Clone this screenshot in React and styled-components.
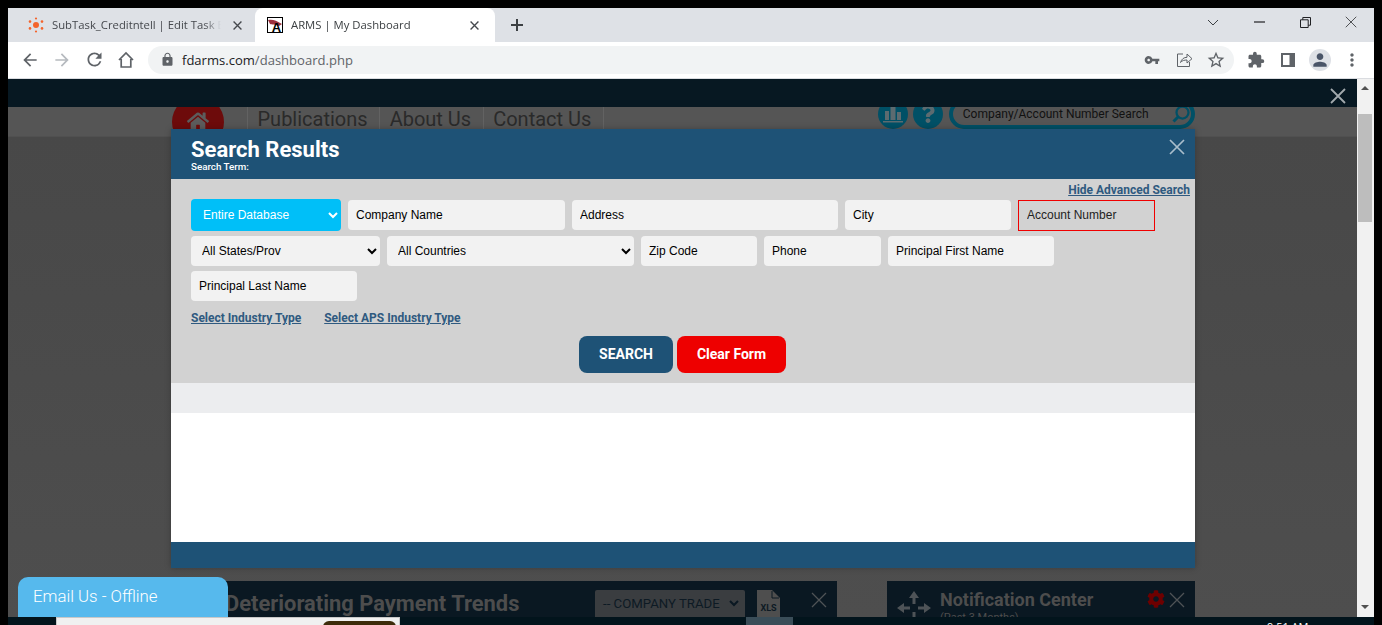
import React from "react";
import styled, { createGlobalStyle } from "styled-components";
import {
  MdArrowBack,
  MdArrowForward,
  MdRefresh,
  MdLock,
  MdVpnKey,
  MdStarBorder,
  MdExtension,
  MdPerson,
  MdMoreVert,
} from "react-icons/md";
import { FaHome, FaQuestion, FaCog } from "react-icons/fa";

const GlobalStyle = createGlobalStyle`
  html, body {
    margin: 0;
    padding: 0;
    background: #000;
    overflow: hidden;
  }
  * {
    box-sizing: border-box;
  }
`;

function CloseLines({ size = 16, stroke = "currentColor", width = 1.5 }) {
  return (
    <svg width={size} height={size} viewBox="0 0 16 16" fill="none">
      <path d="M1 1 L15 15 M15 1 L1 15" stroke={stroke} strokeWidth={width} />
    </svg>
  );
}

function App() {
  return (
    <>
      <GlobalStyle />
      <Screen>
        <Browser>
          <TabStrip>
            <Tab>
              <svg width="16" height="16" viewBox="0 0 16 16" fill="#f4642c">
                <circle cx="8" cy="8" r="3" />
                <circle cx="8" cy="1.5" r="1.1" />
                <circle cx="8" cy="14.5" r="1.1" />
                <circle cx="2" cy="4.6" r="1.3" />
                <circle cx="14" cy="4.6" r="1.3" />
                <circle cx="2" cy="11.4" r="1.3" />
                <circle cx="14" cy="11.4" r="1.3" />
              </svg>
              <TabTitle>SubTask_Creditntell | Edit Task Board</TabTitle>
              <TabClose>
                <CloseLines size={9} stroke="#45484d" width={2.4} />
              </TabClose>
            </Tab>
            <Tab active>
              <svg width="16" height="16" viewBox="0 0 16 16">
                <rect x="0.5" y="0.5" width="15" height="15" fill="#fff" stroke="#000" />
                <path d="M1 3 C5 2 9 3 15 7 L12 9 C8 7 5 8 3 7 Z" fill="#9c2f3c" />
                <text x="9.5" y="14.5" fontSize="13" fontWeight="700" textAnchor="middle" fontFamily="Liberation Sans, sans-serif" fill="#000">A</text>
              </svg>
              <TabTitle>ARMS | My Dashboard</TabTitle>
              <TabClose>
                <CloseLines size={9} stroke="#45484d" width={2.4} />
              </TabClose>
            </Tab>
            <NewTab>
              <svg width="14" height="14" viewBox="0 0 14 14">
                <path d="M7 1 V13 M1 7 H13" stroke="#3c4043" strokeWidth="2" />
              </svg>
            </NewTab>
            <WindowControls>
              <WindowButton>
                <svg width="12" height="7" viewBox="0 0 12 7" fill="none">
                  <path d="M1 1 L6 6 L11 1" stroke="#3c4043" />
                </svg>
              </WindowButton>
              <WindowButton>
                <svg width="11" height="2" viewBox="0 0 11 2">
                  <path d="M0 1 H11" stroke="#202124" strokeWidth="1.2" />
                </svg>
              </WindowButton>
              <WindowButton>
                <svg width="11" height="11" viewBox="0 0 11 11" fill="none">
                  <path d="M0.5 2.8 H8.2 V10.5 H0.5 Z M2.8 2.8 V0.5 H10.5 V8.2 H8.2" stroke="#202124" />
                </svg>
              </WindowButton>
              <WindowButton>
                <CloseLines size={12} stroke="#202124" width={1} />
              </WindowButton>
            </WindowControls>
          </TabStrip>

          <Toolbar>
            <ToolButton>
              <MdArrowBack size={20} />
            </ToolButton>
            <ToolButton faded>
              <MdArrowForward size={20} />
            </ToolButton>
            <ToolButton>
              <MdRefresh size={21} />
            </ToolButton>
            <ToolButton>
              <svg width="18" height="18" viewBox="0 0 18 18" fill="none">
                <path d="M2 9 L9 2 L16 9 M4.2 8 V16 H13.8 V8" stroke="currentColor" strokeWidth="1.7" />
              </svg>
            </ToolButton>
            <Omnibox>
              <MdLock size={15} color="#5f6368" />
              <Url>
                fdarms.com<UrlPath>/dashboard.php</UrlPath>
              </Url>
              <OmniActions>
                <ToolButton>
                  <MdVpnKey size={16} />
                </ToolButton>
                <ToolButton>
                  <svg width="17" height="17" viewBox="0 0 17 17" fill="none">
                    <path d="M7 3 H1.5 V15.5 H13.5 V11 M4.5 11.5 C5.5 8 8 6.3 11 6.3 V3 L16 7.7 L11 12 V9 C8.5 9 6 9.5 4.5 11.5 Z" stroke="currentColor" strokeWidth="1" />
                  </svg>
                </ToolButton>
                <ToolButton>
                  <MdStarBorder size={20} />
                </ToolButton>
              </OmniActions>
            </Omnibox>
            <RightTools>
              <ToolButton>
                <MdExtension size={18} />
              </ToolButton>
              <ToolButton>
                <svg width="14" height="14" viewBox="0 0 14 14">
                  <path fillRule="evenodd" d="M0 0 H14 V14 H0 Z M2 2 V12 H8.5 V2 Z" fill="currentColor" />
                </svg>
              </ToolButton>
              <ToolButton>
                <Avatar>
                  <MdPerson size={20} />
                </Avatar>
              </ToolButton>
              <ToolButton>
                <MdMoreVert size={20} />
              </ToolButton>
            </RightTools>
          </Toolbar>

          <Page>
            <Viewport>
              <TopBar>
                <CloseLines size={16} stroke="#a2a9ad" width={1.8} />
              </TopBar>
              <SiteHeader>
                <HomeBadge>
                  <FaHome size={22} color="#5c5c5c" />
                </HomeBadge>
                <SiteNav>
                  <NavItem>Publications</NavItem>
                  <NavItem>About Us</NavItem>
                  <NavItem>Contact Us</NavItem>
                </SiteNav>
                <HeaderTools>
                  <RoundIcon>
                    <svg width="20" height="18" viewBox="0 0 20 18" fill="#5c6b70">
                      <rect x="2" y="6" width="4" height="9" />
                      <rect x="7.5" y="2" width="5" height="13" />
                      <rect x="14" y="7" width="4" height="8" />
                      <rect x="0" y="16" width="20" height="1.5" />
                    </svg>
                  </RoundIcon>
                  <RoundIcon>
                    <FaQuestion size={18} color="#5c6b70" />
                  </RoundIcon>
                  <HeaderSearch>
                    <span>Company/Account Number Search</span>
                    <svg width="18" height="18" viewBox="0 0 24 24" fill="none">
                      <circle cx="14" cy="10" r="8" stroke="#005066" strokeWidth="3" />
                      <path d="M8 16 L2 22" stroke="#005066" strokeWidth="4" />
                    </svg>
                  </HeaderSearch>
                </HeaderTools>
              </SiteHeader>
              <Dashboard>
                <TrendsPanel>
                  <PanelTitle>Deteriorating Payment Trends</PanelTitle>
                  <PanelSelect>
                    <span>-- COMPANY TRADE</span>
                    <svg width="10" height="7" viewBox="0 0 10 7" fill="none">
                      <path d="M1 1 L5 5 L9 1" stroke="#0a1822" strokeWidth="2" />
                    </svg>
                  </PanelSelect>
                  <XlsIcon>
                    <svg width="23" height="30" viewBox="0 0 23 30">
                      <path d="M0 0 H15 L23 8 V30 H0 Z" fill="#4e4e4e" />
                      <path d="M15 1 V8 H22" fill="none" stroke="#0a1822" strokeWidth="1" />
                      <text x="11.5" y="21" fontSize="9" fontWeight="700" textAnchor="middle" fontFamily="Roboto, sans-serif" fill="#0d1a24">XLS</text>
                    </svg>
                  </XlsIcon>
                  <PanelClose>
                    <CloseLines size={16} stroke="#4f5356" width={1.3} />
                  </PanelClose>
                </TrendsPanel>
                <NotificationPanel>
                  <svg width="34" height="36" viewBox="0 0 34 36" fill="#4e5357">
                    <path d="M17 1 L22 8 H18.5 V14 H15.5 V8 H12 Z" />
                    <path d="M17 35 L22 28 H18.5 V22 H15.5 V28 H12 Z" />
                    <path d="M0 18 L7 13 V16.5 H13 V19.5 H7 V23 Z" />
                    <path d="M34 18 L27 13 V16.5 H21 V19.5 H27 V23 Z" />
                  </svg>
                  <NotificationText>
                    <NotificationTitle>Notification Center</NotificationTitle>
                    <NotificationSub>(Past 3 Months)</NotificationSub>
                  </NotificationText>
                  <FaCog size={18} color="#6d0000" />
                  <NotificationClose>
                    <CloseLines size={16} stroke="#4f5356" width={1.3} />
                  </NotificationClose>
                </NotificationPanel>
              </Dashboard>
            </Viewport>
            <Scrollbar>
              <ScrollUp />
              <ScrollThumb />
              <ScrollDown />
            </Scrollbar>

            <Modal>
              <ModalHeader>
                <div>
                  <ModalTitle>Search Results</ModalTitle>
                  <ModalSub>Search Term:</ModalSub>
                </div>
                <ModalClose>
                  <CloseLines size={16} stroke="#a9bdcb" width={1.7} />
                </ModalClose>
              </ModalHeader>
              <SearchForm>
                <AdvancedRow>
                  <FormLink>Hide Advanced Search</FormLink>
                </AdvancedRow>
                <FieldRow>
                  <FieldSelect w={150} primary defaultValue="all">
                    <option value="all">Entire Database</option>
                  </FieldSelect>
                  <FieldInput w={217} placeholder="Company Name" />
                  <FieldInput w={266} placeholder="Address" />
                  <FieldInput w={166} placeholder="City" />
                  <FieldInput w={137} invalid placeholder="Account Number" />
                </FieldRow>
                <FieldRow>
                  <FieldSelect w={189} defaultValue="all">
                    <option value="all">All States/Prov</option>
                  </FieldSelect>
                  <FieldSelect w={247} defaultValue="all">
                    <option value="all">All Countries</option>
                  </FieldSelect>
                  <FieldInput w={116} placeholder="Zip Code" />
                  <FieldInput w={117} placeholder="Phone" />
                  <FieldInput w={166} placeholder="Principal First Name" />
                </FieldRow>
                <FieldRow>
                  <FieldInput w={166} placeholder="Principal Last Name" />
                </FieldRow>
                <LinkRow>
                  <FormLink>Select Industry Type</FormLink>
                  <FormLink>Select APS Industry Type</FormLink>
                </LinkRow>
                <ButtonRow>
                  <ActionButton w={94} color="#1e5276">SEARCH</ActionButton>
                  <ActionButton w={109} color="#ee0000">Clear Form</ActionButton>
                </ButtonRow>
              </SearchForm>
              <ResultsHead />
              <ResultsBody />
              <ModalFooter />
            </Modal>

            <ChatTab>Email Us - Offline</ChatTab>
          </Page>
        </Browser>

        <Taskbar>
          <TaskSearch>
            <TaskSearchButton />
          </TaskSearch>
          <TaskActive />
          <TaskClock>9:51 AM</TaskClock>
        </Taskbar>
      </Screen>
    </>
  );
}

export default App;

const Screen = styled.div`
  width: 1382px;
  height: 625px;
  padding: 8px 8px 0;
  background: #000;
  display: flex;
  flex-direction: column;
  overflow: hidden;
`;

const Browser = styled.div`
  height: 609px;
  display: flex;
  flex-direction: column;
`;

const TabStrip = styled.div`
  height: 34px;
  flex: none;
  background: #dee1e6;
  display: flex;
  font-family: "Open Sans", sans-serif;
`;

const Tab = styled.div`
  width: ${(props) => (props.active ? "240px" : "247px")};
  padding: ${(props) => (props.active ? "0 13px 0 12px" : "0 10px 0 20px")};
  background: ${(props) => (props.active ? "#fff" : "transparent")};
  border-radius: 8px 8px 0 0;
  display: flex;
  align-items: center;
  gap: 8px;
  color: ${(props) => (props.active ? "#3c4043" : "#45484d")};
`;

const TabTitle = styled.div`
  flex: 1;
  min-width: 0;
  padding-bottom: 2px;
  font-size: 11.3px;
  white-space: nowrap;
  overflow: hidden;
  mask-image: linear-gradient(to right, #000 90%, transparent 100%);
`;

const TabClose = styled.div`
  width: 16px;
  display: flex;
  justify-content: center;
`;

const NewTab = styled.div`
  margin-left: 15px;
  width: 14px;
  display: flex;
  align-items: center;
`;

const WindowControls = styled.div`
  margin-left: auto;
  padding: 0 0 6px;
  display: flex;
  align-items: center;
`;

const WindowButton = styled.div`
  width: 46px;
  display: flex;
  justify-content: center;
`;

const Toolbar = styled.div`
  height: 37px;
  flex: none;
  padding: 4px 6px 5px;
  background: #fff;
  border-bottom: 1px solid #dadce0;
  display: flex;
  align-items: center;
`;

const ToolButton = styled.div`
  width: 32px;
  height: 28px;
  flex: none;
  display: flex;
  align-items: center;
  justify-content: center;
  color: ${(props) => (props.faded ? "#b6babf" : "#5f6368")};
`;

const Omnibox = styled.div`
  margin-left: 6px;
  width: 1086px;
  height: 28px;
  padding: 0 2px 0 12px;
  background: #f1f3f4;
  border-radius: 14px;
  display: flex;
  align-items: center;
`;

const Url = styled.div`
  margin-left: 7px;
  font-family: "Open Sans", sans-serif;
  font-size: 13.05px;
  color: #202124;
`;

const UrlPath = styled.span`
  color: #5f6368;
`;

const OmniActions = styled.div`
  margin-left: auto;
  display: flex;
`;

const RightTools = styled.div`
  margin-left: 6px;
  display: flex;
`;

const Avatar = styled.div`
  width: 22px;
  height: 22px;
  border-radius: 50%;
  background: #dee1e6;
  color: #4a5568;
  display: flex;
  align-items: center;
  justify-content: center;
`;

const Page = styled.div`
  flex: 1;
  min-height: 0;
  position: relative;
  display: flex;
  overflow: hidden;
`;

const Viewport = styled.div`
  flex: 1;
  min-width: 0;
  display: flex;
  flex-direction: column;
  background: #4a4a4a;
`;

const TopBar = styled.div`
  height: 28px;
  flex: none;
  padding: 9px 11px 0 0;
  background: #071822;
  display: flex;
  justify-content: flex-end;
  position: relative;
  z-index: 1;
`;

const SiteHeader = styled.div`
  height: 30px;
  flex: none;
  padding-left: 164px;
  background: #555;
  border-bottom: 1px solid #505050;
  display: flex;
  align-items: flex-start;
`;

const HomeBadge = styled.div`
  width: 52px;
  height: 52px;
  margin-top: -11px;
  padding-bottom: 2px;
  border-radius: 50%;
  background: #6d0b0b;
  display: flex;
  align-items: center;
  justify-content: center;
`;

const SiteNav = styled.div`
  margin-left: 23px;
  height: 22px;
  display: flex;
  border-left: 1px solid #626262;
`;

const NavItem = styled.div`
  padding: 0 11.5px 0 9.5px;
  border-right: 1px solid #626262;
  font-family: Roboto, sans-serif;
  font-size: 20px;
  line-height: 24px;
  color: #2a2a2a;
`;

const HeaderTools = styled.div`
  margin-left: 274px;
  display: flex;
  gap: 5px;
`;

const RoundIcon = styled.div`
  width: 30px;
  height: 30px;
  margin-top: -8px;
  border-radius: 50%;
  background: #005066;
  display: flex;
  align-items: center;
  justify-content: center;
`;

const HeaderSearch = styled.div`
  width: 246px;
  height: 30px;
  margin: -8px 0 0 1px;
  padding: 0 1px 0 10px;
  border: 4px solid #005066;
  border-radius: 15px;
  display: flex;
  align-items: center;
  justify-content: space-between;
  font-family: Roboto, sans-serif;
  font-size: 12px;
  color: #111;
`;

const Dashboard = styled.div`
  flex: 1;
  min-height: 0;
  padding: 444px 0 0 164px;
  background: linear-gradient(#484848, #4e4e4e);
  display: flex;
  gap: 50px;
  overflow: hidden;
`;

const TrendsPanel = styled.div`
  width: 665px;
  height: 60px;
  flex: none;
  padding: 9px 0 0 53px;
  background: #0a1822;
  display: flex;
  align-items: flex-start;
`;

const PanelTitle = styled.div`
  width: 295px;
  font-family: Roboto, sans-serif;
  font-size: 21.9px;
  font-weight: 700;
  line-height: 28px;
  white-space: nowrap;
  color: #4d4d4d;
`;

const PanelSelect = styled.div`
  width: 150px;
  height: 30px;
  margin-left: 75px;
  padding: 0 6px 3px 8px;
  background: #3a3d40;
  border-radius: 2px;
  display: flex;
  align-items: center;
  justify-content: space-between;
  font-family: Roboto, sans-serif;
  font-size: 13.2px;
  white-space: nowrap;
  overflow: hidden;
  color: #0d1a24;
`;

const XlsIcon = styled.div`
  margin-left: 12px;
`;

const PanelClose = styled.div`
  margin: 2px 0 0 31px;
`;

const NotificationPanel = styled.div`
  width: 308px;
  height: 60px;
  flex: none;
  padding: 9px 0 0 10px;
  background: #0a1822;
  display: flex;
  align-items: flex-start;
`;

const NotificationText = styled.div`
  width: 207px;
  margin: -1px 0 0 9px;
  font-family: Roboto, sans-serif;
  color: #4d4d4d;
`;

const NotificationTitle = styled.div`
  font-size: 18px;
  font-weight: 700;
  line-height: 22px;
`;

const NotificationSub = styled.div`
  font-size: 11px;
`;

const NotificationClose = styled.div`
  margin: 2px 0 0 4px;
`;

const Scrollbar = styled.div`
  width: 17px;
  flex: none;
  padding: 0 2px 0 1px;
  background: #f1f1f1;
  display: flex;
  flex-direction: column;
  align-items: center;
`;

const ScrollUp = styled.div`
  margin-top: 7px;
  width: 0;
  height: 0;
  border-left: 4px solid transparent;
  border-right: 4px solid transparent;
  border-bottom: 4px solid #505050;
`;

const ScrollThumb = styled.div`
  width: 100%;
  height: 108px;
  margin-top: 24px;
  background: #bdbdbd;
`;

const ScrollDown = styled.div`
  margin-top: auto;
  margin-bottom: 8px;
  width: 0;
  height: 0;
  border-left: 4px solid transparent;
  border-right: 4px solid transparent;
  border-top: 4px solid #505050;
`;

const Modal = styled.div`
  position: absolute;
  left: 163px;
  top: 50px;
  width: 1024px;
  height: 439px;
  display: flex;
  flex-direction: column;
  box-shadow: 0 0 6px rgba(0, 0, 0, 0.25);
`;

const ModalHeader = styled.div`
  height: 50px;
  flex: none;
  padding: 8px 10px 0 20px;
  background: #1e5276;
  display: flex;
  justify-content: space-between;
  color: #fff;
  font-family: Roboto, sans-serif;
`;

const ModalTitle = styled.div`
  font-size: 22px;
  font-weight: 700;
  line-height: 25px;
`;

const ModalSub = styled.div`
  font-size: 9.8px;
  font-weight: 500;
  line-height: 10px;
`;

const ModalClose = styled.div`
  margin-top: 2px;
`;

const SearchForm = styled.div`
  height: 204px;
  flex: none;
  padding: 5px 5px 0 20px;
  background: #d2d2d2;
  display: flex;
  flex-direction: column;
`;

const AdvancedRow = styled.div`
  height: 15px;
  display: flex;
  justify-content: flex-end;
`;

const FormLink = styled.a`
  font-family: Roboto, sans-serif;
  font-size: 12px;
  font-weight: 700;
  line-height: 13px;
  text-decoration: underline;
  color: #2f5a80;
`;

const FieldRow = styled.div`
  display: flex;
  align-items: center;
  gap: 7px;
  margin-bottom: 5px;
`;

const FieldInput = styled.input`
  width: ${(props) => props.w}px;
  height: ${(props) => (props.invalid ? "31px" : "30px")};
  padding: 0 8px;
  background: ${(props) => (props.invalid ? "#d2d2d2" : "#f2f2f2")};
  border: ${(props) => (props.invalid ? "1px solid #f00000" : "none")};
  border-radius: ${(props) => (props.invalid ? "0" : "4px")};
  outline: none;
  font-family: "Liberation Sans", Arial, sans-serif;
  font-size: 12px;
  &::placeholder {
    color: ${(props) => (props.invalid ? "#222" : "#000")};
    opacity: 1;
  }
`;

const FieldSelect = styled.select`
  width: ${(props) => props.w}px;
  height: ${(props) => (props.primary ? "32px" : "30px")};
  padding: 0 0 0 ${(props) => (props.primary ? "8px" : "7px")};
  background-color: ${(props) => (props.primary ? "#00bff8" : "#f2f2f2")};
  color: ${(props) => (props.primary ? "#fff" : "#000")};
  border: none;
  border-radius: 4px;
  outline: none;
  font-family: "Liberation Sans", Arial, sans-serif;
  font-size: 12px;
`;

const LinkRow = styled.div`
  margin-top: 6px;
  display: flex;
  gap: 23px;
`;

const ButtonRow = styled.div`
  margin-top: 11px;
  padding-left: 388px;
  display: flex;
  gap: 4px;
`;

const ActionButton = styled.div`
  width: ${(props) => props.w}px;
  height: 37px;
  padding-bottom: 1px;
  background: ${(props) => props.color};
  border-radius: 8px;
  display: flex;
  align-items: center;
  justify-content: center;
  font-family: Roboto, sans-serif;
  font-size: 14px;
  font-weight: 700;
  color: #fff;
`;

const ResultsHead = styled.div`
  height: 30px;
  flex: none;
  background: #ecedef;
`;

const ResultsBody = styled.div`
  flex: 1;
  background: #fff;
`;

const ModalFooter = styled.div`
  height: 26px;
  flex: none;
  background: #1e5276;
`;

const ChatTab = styled.div`
  position: absolute;
  left: 10px;
  bottom: 0;
  width: 210px;
  height: 40px;
  padding: 0 15px 2px;
  background: #56b9ed;
  border-radius: 10px 10px 0 0;
  display: flex;
  align-items: center;
  font-family: Roboto, sans-serif;
  font-size: 16.8px;
  font-weight: 300;
  color: #fff;
`;

const Taskbar = styled.div`
  height: 8px;
  flex: none;
  background: #02141c;
  display: flex;
  overflow: hidden;
`;

const TaskSearch = styled.div`
  width: 344px;
  height: 20px;
  margin-left: 48px;
  padding: 3px 3px 0 0;
  background: #f0f0f0;
  border: 1px solid #c8c8c8;
  display: flex;
  justify-content: flex-end;
`;

const TaskSearchButton = styled.div`
  width: 73px;
  height: 20px;
  background: #3d2b0a;
  border-radius: 6px;
`;

const TaskActive = styled.div`
  width: 47px;
  margin-left: 346px;
  background: #3a4d58;
`;

const TaskClock = styled.div`
  margin-left: 474px;
  padding-top: 3px;
  font-family: "Open Sans", sans-serif;
  font-size: 11px;
  line-height: 14px;
  white-space: nowrap;
  color: #fff;
`;
